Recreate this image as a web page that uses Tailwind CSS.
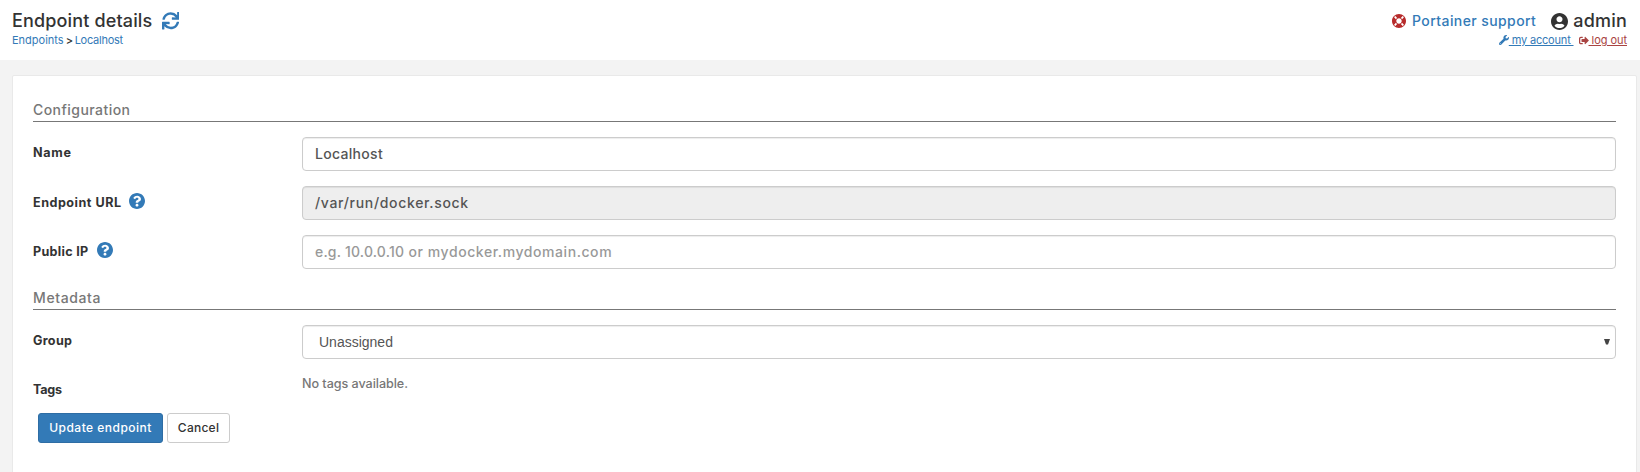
<!DOCTYPE html>
<html lang="en">
<head>
<meta charset="utf-8">
<title>Endpoint details</title>
<script src="https://cdn.jsdelivr.net/npm/@tailwindcss/browser@4"></script>
</head>
<body class="h-[472px] overflow-hidden bg-[#f3f3f3] font-['Inter',sans-serif] text-sm leading-5 text-[#333]">
<svg class="hidden">
  <symbol id="help" viewBox="8 8 496 496"><path d="M504 256c0 136.997-111.043 248-248 248S8 392.997 8 256C8 119.083 119.043 8 256 8s248 111.083 248 248zM262.655 90c-54.497 0-89.255 22.957-116.549 63.758-3.536 5.286-2.353 12.415 2.715 16.258l34.699 26.310c5.205 3.947 12.621 3.008 16.665-2.122 17.864-22.658 30.113-35.797 57.303-35.797 20.429 0 45.698 13.148 45.698 32.958 0 14.976-12.363 22.667-32.534 33.976C247.128 238.528 216 254.941 216 296v4c0 6.627 5.373 12 12 12h56c6.627 0 12-5.373 12-12v-1.333c0-28.462 83.186-29.647 83.186-106.667 0-58.002-60.165-102-116.531-102zM256 338c-25.365 0-46 20.635-46 46 0 25.364 20.635 46 46 46s46-20.636 46-46c0-25.364-20.635-46-46-46z"/></symbol>
</svg>
<header class="flex h-[60px] justify-between bg-white pr-[13px] pl-3">
  <div class="pt-[9px]">
    <div class="flex h-6 items-center">
      <h1 class="w-[140px] text-[18px] font-medium tracking-[0.15px] whitespace-nowrap">Endpoint details</h1>
      <svg class="ml-[9.500px] size-[17.500px] fill-[#337ab7]" viewBox="0 0 512 512"><path d="M440.650 12.570l4 82.770A247.160 247.160 0 0 0 255.830 8C134.730 8 33.910 94.920 12.290 209.820A12 12 0 0 0 24.090 224h49.050a12 12 0 0 0 11.670-9.260 175.910 175.910 0 0 1 317-56.940l-101.460-4.860a12 12 0 0 0-12.570 12v47.410a12 12 0 0 0 12 12H500a12 12 0 0 0 12-12V12a12 12 0 0 0-12-12h-47.370a12 12 0 0 0-11.980 12.570zM255.830 432a175.610 175.610 0 0 1-146-77.800l101.800 4.870a12 12 0 0 0 12.570-12v-47.400a12 12 0 0 0-12-12H12a12 12 0 0 0-12 12V500a12 12 0 0 0 12 12h47.350a12 12 0 0 0 12-12.600l-4.150-82.570A247.170 247.170 0 0 0 255.830 504c121.110 0 221.930-86.920 243.550-201.820a12 12 0 0 0-11.800-14.180h-49.050a12 12 0 0 0-11.670 9.260A175.860 175.860 0 0 1 255.830 432z"/></svg>
    </div>
    <nav class="flex gap-[3px] text-[11px] leading-[14px] text-[#337ab7]"><span>Endpoints</span><span class="-ml-px w-[7px] font-medium text-[#333]">&gt;</span><span class="-ml-px tracking-[-0.25px]">Localhost</span></nav>
  </div>
  <div class="flex flex-col items-end pt-[9px]">
    <div class="flex h-6 items-center">
      <svg class="size-[14px] fill-[#b72b2b]" viewBox="8 8 496 496"><path d="M256 8C119 8 8 119 8 256s111 248 248 248 248-111 248-248S393 8 256 8zm173.696 119.559l-63.399 63.399c-10.987-18.559-26.670-34.252-45.255-45.255l63.399-63.399a218.396 218.396 0 0 1 45.255 45.255zM256 352c-53.019 0-96-42.981-96-96s42.981-96 96-96 96 42.981 96 96-42.981 96-96 96zM127.559 82.304l63.399 63.399c-18.559 10.987-34.252 26.670-45.255 45.255l-63.399-63.399a218.372 218.372 0 0 1 45.255-45.255zM82.304 384.441l63.399-63.399c10.987 18.559 26.670 34.252 45.255 45.255l-63.399 63.399a218.396 218.396 0 0 1-45.255-45.255zm302.137 45.255l-63.399-63.399c18.559-10.987 34.252-26.670 45.255-45.255l63.399 63.399a218.403 218.403 0 0 1-45.255 45.255z"/></svg>
      <span class="ml-[6px] font-medium tracking-[0.41px] text-[#337ab7]">Portainer support</span>
      <svg class="ml-[15px] size-[17px] fill-[#333]" viewBox="0 8 496 496"><path d="M248 8C111 8 0 119 0 256s111 248 248 248 248-111 248-248S385 8 248 8zm0 96c48.600 0 88 39.400 88 88s-39.400 88-88 88-88-39.400-88-88 39.400-88 88-88zm0 344c-58.700 0-111.300-26.600-146.500-68.200 18.800-35.400 55.600-59.800 98.500-59.800 2.400 0 4.800.4 7.100 1.100 13 4.200 26.600 6.900 40.900 6.900 14.300 0 28-2.700 40.900-6.900 2.300-.7 4.700-1.100 7.100-1.100 42.900 0 79.700 24.400 98.500 59.800C359.300 421.400 306.700 448 248 448z"/></svg>
      <span class="ml-[5px] text-[18px] font-medium tracking-[0.2px]">admin</span>
    </div>
    <div class="flex items-center text-[11px] leading-[14px]">
      <svg class="size-[10px] fill-[#337ab7]" viewBox="0 0 512 512"><path d="M507.730 109.100c-2.240-9.030-13.540-12.090-20.120-5.510l-74.360 74.360-67.880-11.310-11.310-67.880 74.360-74.360c6.620-6.620 3.430-17.900-5.660-20.160-47.380-11.740-99.550.91-136.580 37.930-39.640 39.640-50.550 97.100-34.050 147.200L18.740 402.760c-24.990 24.990-24.990 65.510 0 90.500 24.990 24.990 65.510 24.990 90.500 0l213.210-213.210c50.120 16.710 107.470 5.680 147.370-34.220 37.070-37.070 49.700-89.320 37.910-136.730zM64 472c-13.250 0-24-10.750-24-24 0-13.260 10.750-24 24-24s24 10.740 24 24c0 13.250-10.750 24-24 24z"/></svg>
      <span class="tracking-[-0.18px] whitespace-pre text-[#337ab7] underline"> my account </span>
      <svg class="ml-[5px] h-[11px] w-[10px] fill-[#a94442]" viewBox="0 0 512 512"><path d="M497 273L329 441c-15 15-41 4.500-41-17v-96H152c-13.300 0-24-10.700-24-24v-96c0-13.300 10.700-24 24-24h136V88c0-21.400 25.900-32 41-17l168 168c9.300 9.400 9.300 24.600 0 34zM192 436v-40c0-6.600-5.400-12-12-12H96c-17.700 0-32-14.300-32-32V160c0-17.700 14.300-32 32-32h84c6.600 0 12-5.400 12-12V76c0-6.600-5.400-12-12-12H96c-53 0-96 43-96 96v192c0 53 43 96 96 96h84c6.600 0 12-5.400 12-12z"/></svg>
      <span class="tracking-[-0.05px] whitespace-pre text-[#a94442] underline"> log out</span>
    </div>
  </div>
</header>
<main class="mt-[15px] mr-[3px] ml-3 h-[420px] rounded-[2px] border border-[#e9e9e9] bg-white px-5 pt-[24px]">
  <h2 class="mb-[15px] h-[22px] border-b border-[#777] font-medium tracking-[0.45px] text-[#777]">Configuration</h2>
  <div class="mb-[15px] flex h-[34px]">
    <label class="w-[269px] pt-[6px] text-[12.600px] font-bold tracking-[0.7px]">Name</label>
    <div class="flex-1 rounded border border-[#ccc] px-3 pt-[6px] font-medium tracking-[0.3px] text-[#555] shadow-[inset_0_1px_1px_rgba(0,0,0,0.075)]">Localhost</div>
  </div>
  <div class="mb-[15px] flex h-[34px]">
    <label class="flex w-[269px] text-[12.600px] font-bold"><span class="w-24 pt-[7px] tracking-[0.5px]">Endpoint URL</span><svg class="mt-[7px] size-4 fill-[#337ab7]"><use href="#help"/></svg></label>
    <div class="flex-1 rounded border border-[#ccc] bg-[#eee] px-3 pt-[6px] font-medium tracking-[0.68px] text-[#555] shadow-[inset_0_1px_1px_rgba(0,0,0,0.075)]">/var/run/docker.sock</div>
  </div>
  <div class="mb-[19px] flex h-[34px]">
    <label class="flex w-[269px] text-[12.600px] font-bold"><span class="w-16 pt-[7px] tracking-[0.3px]">Public IP</span><svg class="mt-[7px] size-4 fill-[#337ab7]"><use href="#help"/></svg></label>
    <div class="flex-1 rounded border border-[#ccc] px-3 pt-[6px] font-medium tracking-[0.57px] text-[#999] shadow-[inset_0_1px_1px_rgba(0,0,0,0.075)]"><span class="tracking-[0.2px]">e.g. 10.0.0.10</span> or mydocker.mydomain.com</div>
  </div>
  <h2 class="mb-[15px] h-[22px] border-b border-[#777] font-medium tracking-[0.6px] text-[#777]">Metadata</h2>
  <div class="mb-[15px] flex h-[34px]">
    <label class="w-[269px] pt-[6px] text-[12.600px] font-bold tracking-[0.3px]">Group</label>
    <div class="flex flex-1 items-center justify-between rounded border border-[#ccc] pr-[5px] pl-4 font-['Liberation_Sans',Arial,sans-serif] text-[#555] shadow-[inset_0_1px_1px_rgba(0,0,0,0.075)]"><span>Unassigned</span><svg class="h-[6px] w-[6px] fill-[#444]" viewBox="0 0 6 6"><path d="M0 0h6L4 5.500H2z"/></svg></div>
  </div>
  <div class="flex h-[39px]">
    <label class="w-[269px] pt-[6px] text-[12.600px] font-bold tracking-[-0.25px]">Tags</label>
    <p class="text-[12.600px] font-medium tracking-[-0.05px] text-[#777]">No tags available.</p>
  </div>
  <div class="flex gap-1 pl-[5px] text-xs leading-[18px] font-medium">
    <button class="h-[30px] w-[125px] rounded-[3px] border border-[#2e6da4] bg-[#337ab7] tracking-[0.48px] text-white">Update endpoint</button>
    <button class="h-[30px] w-[63px] rounded-[3px] border border-[#ccc] tracking-[0.25px]">Cancel</button>
  </div>
</main>
</body>
</html>
